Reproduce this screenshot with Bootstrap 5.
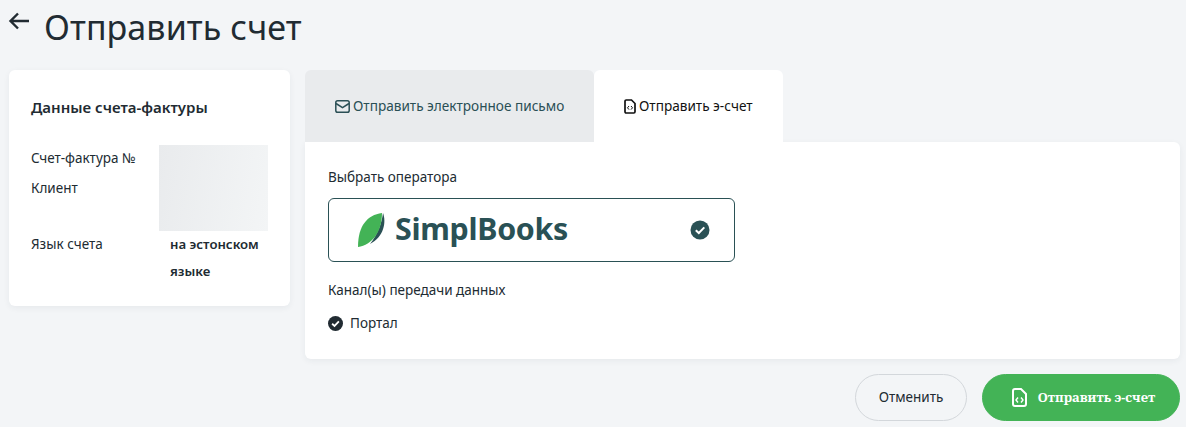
<!doctype html>
<html lang="ru"><head><meta charset="utf-8"><title>Отправить счет</title>
<link href="https://cdn.jsdelivr.net/npm/bootstrap@5.3.0/dist/css/bootstrap.min.css" rel="stylesheet">
<style>
html,body{height:427px;overflow:hidden}
body{background:#f3f5f7;font-family:"Noto Sans",sans-serif;color:#212b32;font-size:13.500px}
.pg{padding:0 6px 0 9px}
.pg-head{height:70px;gap:14px;padding-top:5px}
.pg-head h1{font-size:34px;font-weight:400;margin:0;line-height:44px;color:#212b32;letter-spacing:.1px}
.back{width:22px;height:22px;margin-top:5px;margin-left:-1px;color:#212b32}
.side{width:281px;flex:none;height:236px;background:#fff;border-radius:6px;box-shadow:0 2px 6px rgba(30,50,60,.06);padding:26px 22px}
.side h2{font-size:15px;font-weight:600;line-height:22px;margin:0 0 27px;color:#212b32}
.lbls{width:128px;flex:none}
.lbls div{line-height:27px;height:30px;padding-top:0}
.lbls .lang{margin-top:26px;height:auto}
.blur{width:109px;height:86px;background:linear-gradient(100deg,#e9ebed,#f3f5f6)}
.lang-val{font-weight:600;font-size:13.200px;line-height:27px;padding:0 0 0 11px;margin-top:0;width:109px}
.main{flex:1;min-width:0;margin-left:15px}
.tb{height:72px;gap:3px;font-size:13.600px;padding:0 30px;border-radius:6px 6px 0 0;white-space:nowrap}
.tb svg{flex:none}
.tb1{width:289px;background:#e9ebed;color:#2a4f55}
.tb2{width:189px;background:#fff;color:#111}
.pnl{height:217px;background:#fff;border-radius:0 6px 6px 6px;box-shadow:0 2px 6px rgba(30,50,60,.06);padding:25px 23px}
.pnl .cap{line-height:20px;margin-bottom:11px}
.oper{width:407px;height:64px;border:1px solid #2a5155;border-radius:6px;padding:0 24px 0 28px;margin-bottom:18px}
.logo-t{font-size:30.400px;font-weight:700;color:#2a5155;line-height:1;margin-left:8px;letter-spacing:-.3px;position:relative;top:-1px}
.port{gap:7px;margin-top:13px;line-height:20px}
.port svg{flex:none}
.acts{margin-top:15px;gap:15px}
.b-cancel,.b-send{height:47px;border-radius:24px;font-size:13.500px}
.b-cancel{width:112px;background:transparent;border:1px solid #d3d7db;color:#212b32}
.b-send{width:198px;background:#43b356;border:1px solid #43b356;color:#fff;font-weight:700;font-family:"Noto Serif","DejaVu Sans",sans-serif;gap:11px;font-size:13px;padding-left:17px}
.b-send:hover{background:#43b356;color:#fff}
</style></head><body>
<div class="pg">
<div class="pg-head d-flex align-items-start">
<svg class="back" viewBox="0 0 22 22" fill="none" stroke="currentColor" stroke-width="2.400"><path d="M21 11H2.500M10 3.500 2.500 11l7.500 7.500"/></svg>
<h1>Отправить счет</h1>
</div>
<div class="d-flex align-items-start">
<div class="side">
<h2>Данные счета-фактуры</h2>
<div class="d-flex">
<div class="lbls"><div>Счет-фактура №</div><div>Клиент</div><div class="lang">Язык счета</div></div>
<div><div class="blur"></div><div class="lang-val">на эстонском языке</div></div>
</div>
</div>
<div class="main">
<div class="d-flex">
<div class="tb tb1 d-flex align-items-center">
<svg width="15" height="13" viewBox="0 0 15 13" fill="none" stroke="currentColor" stroke-width="1.500"><rect x=".8" y=".8" width="13.400" height="11.400" rx="1.800"/><path d="m1 3.500 6.500 4.200L14 3.500"/></svg>
<span>Отправить электронное письмо</span></div>
<div class="tb tb2 d-flex align-items-center">
<svg width="12" height="15" viewBox="0 0 12 15" fill="none" stroke="currentColor" stroke-width="1.700"><path d="M1 2.200C1 1.500 1.500 1 2.200 1H7.500l3.500 3.500v8.300c0 .7-.5 1.200-1.200 1.200H2.200C1.500 14 1 13.500 1 12.800z"/><path d="M5 7 3.500 8.800 5 10.600M7 7l1.500 1.800L7 10.600" stroke-width="1"/></svg>
<span>Отправить э-счет</span></div>
</div>
<div class="pnl">
<div class="cap">Выбрать оператора</div>
<div class="oper d-flex align-items-center justify-content-between">
<div class="d-flex align-items-center">
<svg width="30" height="36" viewBox="0 0 30 36"><path d="M26 1c3.500 9 1 24-13 31C21 22 25 10 26 1z" fill="#2a5155"/><path d="M25 1C10 3 1 14 1 35c14-2 24-15 24-34z" fill="#43b356"/></svg>
<span class="logo-t">SimplBooks</span></div>
<svg width="20" height="20" viewBox="0 0 20 20"><circle cx="10" cy="10" r="9.500" fill="#2a5155"/><path d="m5.800 10.300 3 2.700 5.500-5.600" fill="none" stroke="#fff" stroke-width="2"/></svg>
</div>
<div class="cap mb-0">Канал(ы) передачи данных</div>
<div class="port d-flex align-items-center">
<svg width="15" height="15" viewBox="0 0 20 20"><circle cx="10" cy="10" r="10" fill="#212b32"/><path d="m5.500 10.300 3.200 2.900 5.800-6" fill="none" stroke="#fff" stroke-width="2.400"/></svg>
<span>Портал</span></div>
</div>
<div class="acts d-flex justify-content-end">
<button type="button" class="btn b-cancel">Отменить</button>
<button type="button" class="btn b-send d-flex align-items-center justify-content-center">
<svg width="15" height="19" viewBox="0 0 15 19" fill="none" stroke="#fff" stroke-width="2"><path d="M1 3c0-1.200.8-2 2-2h6l5 5v10c0 1.200-.8 2-2 2H3c-1.200 0-2-.8-2-2z"/><path d="M6 9.500 4 12l2 2.500M9 9.500l2 2.500-2 2.500" stroke-width="1.400"/></svg>
<span>Отправить э-счет</span></button>
</div>
</div>
</div>
</div>
<script src="https://cdn.jsdelivr.net/npm/bootstrap@5.3.0/dist/js/bootstrap.bundle.min.js"></script>
</body></html>
